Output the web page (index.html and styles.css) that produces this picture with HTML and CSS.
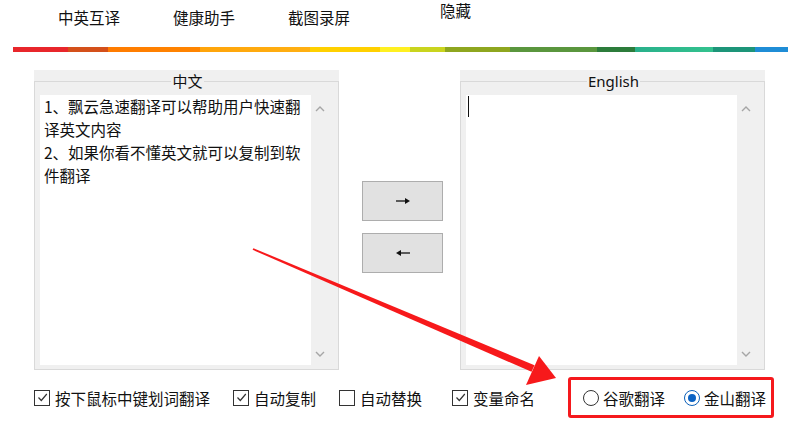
FILE: index.html
```html
<!DOCTYPE html>
<html lang="zh-CN">
<head>
    <meta charset="UTF-8">
    <title>飘云急速翻译</title>
    <link rel="stylesheet" href="styles.css">
</head>
<body>
    <!-- top menu -->
    <div class="tabs">
        <span class="tab">中英互译</span>
        <span class="tab">健康助手</span>
        <span class="tab">截图录屏</span>
        <span class="tab tab-hide">隐藏</span>
    </div>
    <div class="rainbow"></div>

    <div class="main">
        <div class="panel">
            <fieldset class="group">
                <legend>中文</legend>
                <div class="textbox">
                    <div class="text">1、飘云急速翻译可以帮助用户快速翻译英文内容<br>2、如果你看不懂英文就可以复制到软件翻译</div>
                    <div class="scroll">
                        <svg width="10" height="6" viewBox="0 0 10 6"><path d="M1 5 L5 1 L9 5" fill="none" stroke="#a6a6a6" stroke-width="1.4"/></svg>
                        <svg width="10" height="6" viewBox="0 0 10 6"><path d="M1 1 L5 5 L9 1" fill="none" stroke="#a6a6a6" stroke-width="1.4"/></svg>
                    </div>
                </div>
            </fieldset>
        </div>

        <div class="actions">
            <button class="arrow-button">
                <svg width="16" height="8" viewBox="0 0 16 8"><path d="M1 4 H11" stroke="#111" stroke-width="1.3"/><path d="M10 1 L15 4 L10 7 Z" fill="#111"/></svg>
            </button>
            <button class="arrow-button">
                <svg width="16" height="8" viewBox="0 0 16 8"><path d="M5 4 H15" stroke="#111" stroke-width="1.3"/><path d="M6 1 L1 4 L6 7 Z" fill="#111"/></svg>
            </button>
        </div>

        <div class="panel">
            <fieldset class="group">
                <legend class="legend-en">English</legend>
                <div class="textbox">
                    <div class="text"><span class="caret"></span></div>
                    <div class="scroll">
                        <svg width="10" height="6" viewBox="0 0 10 6"><path d="M1 5 L5 1 L9 5" fill="none" stroke="#a6a6a6" stroke-width="1.4"/></svg>
                        <svg width="10" height="6" viewBox="0 0 10 6"><path d="M1 1 L5 5 L9 1" fill="none" stroke="#a6a6a6" stroke-width="1.4"/></svg>
                    </div>
                </div>
            </fieldset>
        </div>
    </div>

    <div class="options">
        <label class="check"><span class="box"><svg width="13" height="13" viewBox="0 0 13 13"><path d="M2.5 6.5 L5.3 9.5 L10.8 3" fill="none" stroke="#333" stroke-width="1.2"/></svg></span>按下鼠标中键划词翻译</label>
        <label class="check"><span class="box"><svg width="13" height="13" viewBox="0 0 13 13"><path d="M2.5 6.5 L5.3 9.5 L10.8 3" fill="none" stroke="#333" stroke-width="1.2"/></svg></span>自动复制</label>
        <label class="check check-wide"><span class="box"></span>自动替换</label>
        <label class="check check-last"><span class="box"><svg width="13" height="13" viewBox="0 0 13 13"><path d="M2.5 6.5 L5.3 9.5 L10.8 3" fill="none" stroke="#333" stroke-width="1.2"/></svg></span>变量命名</label>

        <div class="engines">
            <label class="radio"><span class="dot"></span>谷歌翻译</label>
            <label class="radio"><span class="dot dot-on"></span>金山翻译</label>
        </div>
    </div>

    <!-- red annotation arrow -->
    <svg class="annotation" width="788" height="426" viewBox="0 0 788 426">
        <polygon points="253.4,248.2 252.6,249.8 531.5,371.8 534.5,365.2" fill="#f7191b"/>
        <polygon points="556,378 539,356 526,385" fill="#f7191b"/>
    </svg>
</body>
</html>
```

FILE: styles.css
```css
body {
    margin: 0;
    background: #fff;
    color: #111;
    font-family: "Noto Sans CJK SC", "Noto Sans", sans-serif;
    font-size: 15.5px;
    width: 788px;
    height: 426px;
    overflow: hidden;
    position: relative;
}

.tabs {
    display: flex;
    gap: 53px;
    height: 47px;
    padding-left: 58px;
    box-sizing: border-box;
}

.tab {
    line-height: 22px;
    margin-top: 6px;
    align-self: flex-start;
}

.tab-hide {
    margin-top: 0;
    line-height: 20px;
    margin-left: 37px;
}

.rainbow {
    margin-left: 13px;
    height: 5px;
    background: linear-gradient(90deg,
        #e8262b 0, #e8262b 55px,
        #d4501a 55px, #d4501a 95px,
        #ff7b00 95px, #ff8500 187px,
        #ffa40a 187px, #ffb012 297px,
        #ffd000 297px, #ffd000 367px,
        #fff021 367px, #fff021 397px,
        #c9d41e 397px, #c9d41e 432px,
        #8ea61f 432px, #8ea61f 497px,
        #5a963d 497px, #5a963d 584px,
        #2c7c3b 584px, #2c7c3b 622px,
        #29b08b 622px, #33c28e 700px,
        #1d9579 700px, #1d9579 742px,
        #1f8dd6 742px, #1f8dd6 775px);
}

.main {
    display: flex;
    margin-top: 18px;
    padding-left: 34px;
}

.panel {
    width: 305px;
    height: 300px;
    background: #f0f0f0;
}

.group {
    margin: 0;
    padding: 0 3px 4px 5px;
    height: 100%;
    box-sizing: border-box;
    border: 1px solid #d9d9d9;
    display: flex;
    flex-direction: column;
    min-width: 0;
}

.group legend {
    margin: 0 auto;
    padding: 0 1px;
    font-size: 15px;
    line-height: 22px;
}

.group .legend-en {
    font-family: "Noto Sans", "Noto Sans CJK SC", sans-serif;
}

.textbox {
    flex: 1;
    display: flex;
    margin-top: 3px;
}

.text {
    width: 263px;
    background: #fff;
    padding: 0 4px 0 4px;
    line-height: 23px;
}

.caret {
    display: block;
    width: 1px;
    height: 21px;
    margin-top: 1px;
    margin-left: -2px;
    background: #111;
}

.scroll {
    flex: 1;
    display: flex;
    flex-direction: column;
    justify-content: space-between;
    align-items: center;
    padding: 11px 6px 8px 0;
}

.actions {
    display: flex;
    flex-direction: column;
    gap: 12px;
    padding-top: 111px;
    margin: 0 17px 0 23px;
}

.arrow-button {
    width: 81px;
    height: 40px;
    background: #e1e1e1;
    border: 1px solid #adadad;
    padding: 0;
    display: flex;
    align-items: center;
    justify-content: center;
}

.options {
    display: flex;
    align-items: center;
    margin-top: 7px;
    padding-left: 34px;
}

.check {
    display: flex;
    align-items: center;
    gap: 5px;
    margin-right: 23px;
}

.check-wide {
    margin-right: 30px;
}

.check-last {
    margin-right: 33px;
}

.box {
    width: 14px;
    height: 14px;
    border: 1px solid #333;
    display: flex;
    align-items: center;
    justify-content: center;
}

.engines {
    display: flex;
    align-items: center;
    gap: 19px;
    height: 35px;
    padding: 0 5px 0 12px;
    border: 3px solid #f5191d;
    border-radius: 3px;
}

.radio {
    display: flex;
    align-items: center;
    gap: 4px;
}

.dot {
    width: 14px;
    height: 14px;
    border: 1px solid #333;
    border-radius: 50%;
    box-sizing: content-box;
    position: relative;
}

.dot-on {
    border-color: #0a5fb8;
}

.dot-on::after {
    content: "";
    position: absolute;
    left: 3px;
    top: 3px;
    width: 8px;
    height: 8px;
    border-radius: 50%;
    background: #0b63c4;
}

.annotation {
    position: absolute;
    left: 0;
    top: 0;
    pointer-events: none;
}
```
